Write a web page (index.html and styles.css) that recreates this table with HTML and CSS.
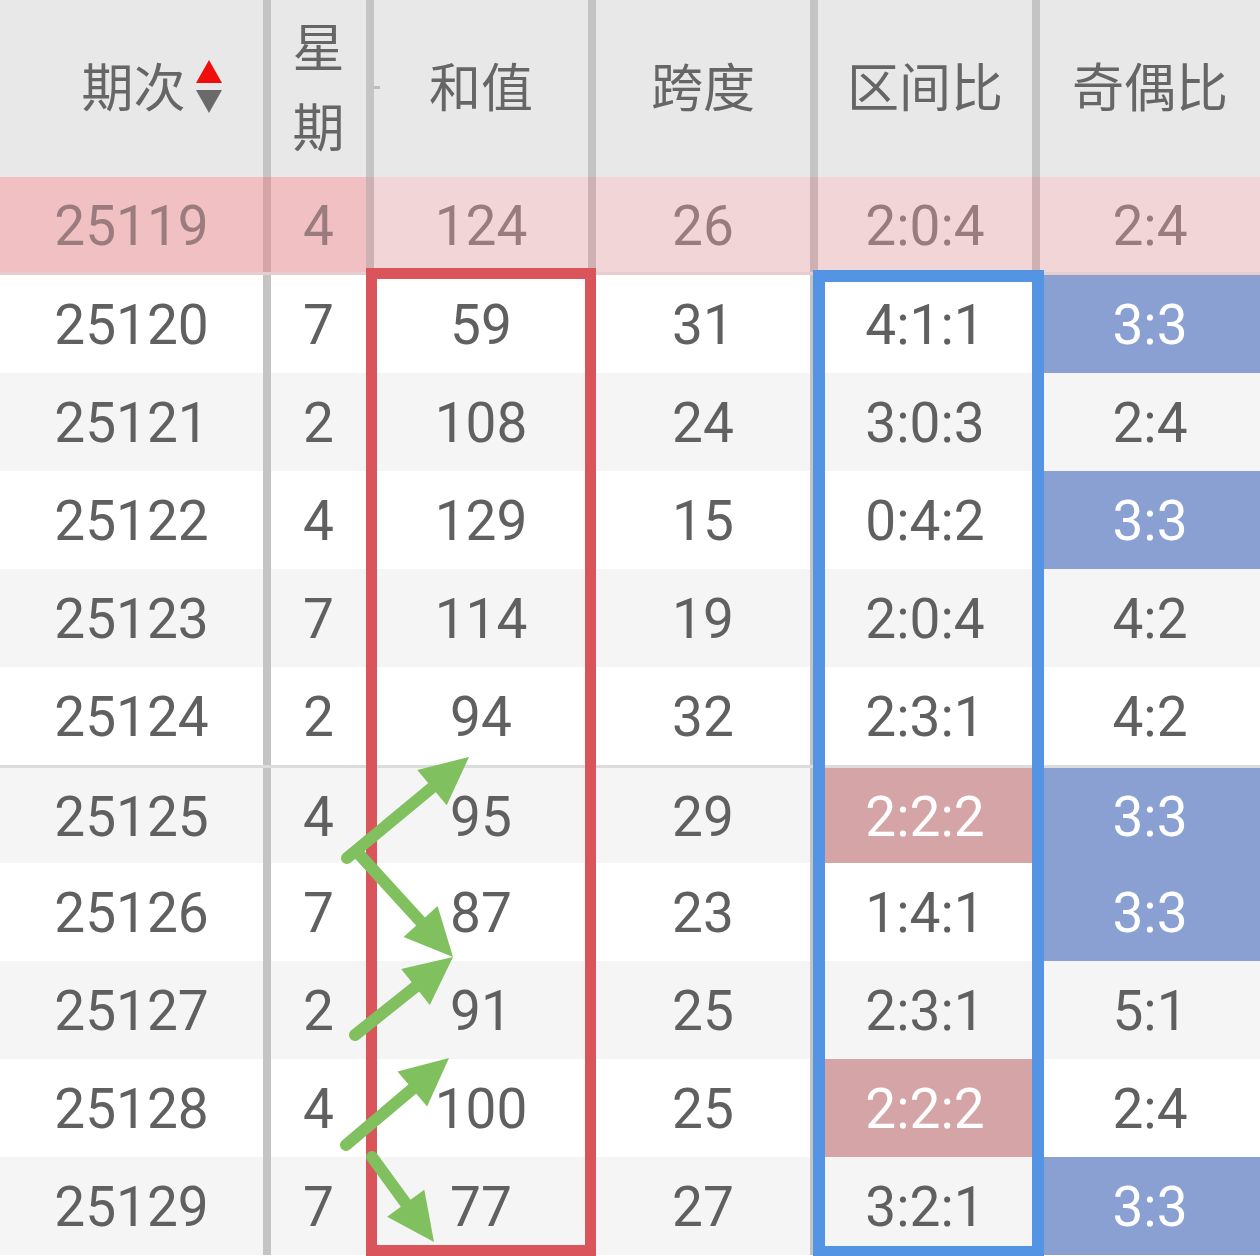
FILE: index.html
```html
<!DOCTYPE html>
<html lang="zh">
<head>
<meta charset="utf-8">
<title>开奖走势</title>
<link rel="stylesheet" href="styles.css">
</head>
<body>
<div class="board">
  <div class="table">
    <div class="row head">
      <div class="cell c1"><span class="htext">期次</span><span class="sort"><i class="up"></i><i class="down"></i></span></div>
      <div class="cell c2 week"><span>星</span><span>期</span></div>
      <div class="cell c3"><span class="tick"></span>和值</div>
      <div class="cell">跨度</div>
      <div class="cell">区间比</div>
      <div class="cell">奇偶比</div>
    </div>

    <div class="row cur">
      <div class="cell c1 strong">25119</div><div class="cell strong">4</div><div class="cell">124</div><div class="cell">26</div><div class="cell">2:0:4</div><div class="cell">2:4</div>
    </div>
    <div class="row">
      <div class="cell c1">25120</div><div class="cell">7</div><div class="cell">59</div><div class="cell">31</div><div class="cell">4:1:1</div><div class="cell blue">3:3</div>
    </div>
    <div class="row alt">
      <div class="cell c1">25121</div><div class="cell">2</div><div class="cell">108</div><div class="cell">24</div><div class="cell">3:0:3</div><div class="cell">2:4</div>
    </div>
    <div class="row">
      <div class="cell c1">25122</div><div class="cell">4</div><div class="cell">129</div><div class="cell">15</div><div class="cell">0:4:2</div><div class="cell blue">3:3</div>
    </div>
    <div class="row alt">
      <div class="cell c1">25123</div><div class="cell">7</div><div class="cell">114</div><div class="cell">19</div><div class="cell">2:0:4</div><div class="cell">4:2</div>
    </div>
    <div class="row">
      <div class="cell c1">25124</div><div class="cell">2</div><div class="cell">94</div><div class="cell">32</div><div class="cell">2:3:1</div><div class="cell">4:2</div>
    </div>
    <div class="row alt sep">
      <div class="cell c1">25125</div><div class="cell">4</div><div class="cell">95</div><div class="cell">29</div><div class="cell pink">2:2:2</div><div class="cell blue">3:3</div>
    </div>
    <div class="row">
      <div class="cell c1">25126</div><div class="cell">7</div><div class="cell">87</div><div class="cell">23</div><div class="cell">1:4:1</div><div class="cell blue">3:3</div>
    </div>
    <div class="row alt">
      <div class="cell c1">25127</div><div class="cell">2</div><div class="cell">91</div><div class="cell">25</div><div class="cell">2:3:1</div><div class="cell">5:1</div>
    </div>
    <div class="row">
      <div class="cell c1">25128</div><div class="cell">4</div><div class="cell">100</div><div class="cell">25</div><div class="cell pink">2:2:2</div><div class="cell">2:4</div>
    </div>
    <div class="row alt">
      <div class="cell c1">25129</div><div class="cell">7</div><div class="cell">77</div><div class="cell">27</div><div class="cell">3:2:1</div><div class="cell blue">3:3</div>
    </div>
  </div>

  <div class="frame frame-red"></div>
  <div class="frame frame-blue"></div>

  <svg class="arrows" width="1260" height="1256" viewBox="0 0 1260 1256" aria-hidden="true">
    <g stroke="#80c05e" stroke-width="12" stroke-linecap="round" fill="none">
      <line x1="347" y1="858" x2="438.2" y2="782.5"/>
      <line x1="358" y1="853" x2="426" y2="927.5"/>
      <line x1="355" y1="1035" x2="421.7" y2="981.9"/>
      <line x1="346" y1="1145" x2="418.4" y2="1083.8"/>
      <line x1="372" y1="1157" x2="410.4" y2="1209.7"/>
    </g>
    <g fill="#80c05e">
      <polygon points="469,757 446.7,805.3 417.3,769.9"/>
      <polygon points="453,957 403.6,937.1 437.6,906.1"/>
      <polygon points="453,957 429.8,1004.9 401.2,968.9"/>
      <polygon points="449,1058 427.1,1106.6 397.5,1071.4"/>
      <polygon points="434,1242 387.1,1216.7 424.3,1189.7"/>
    </g>
  </svg>
</div>
</body>
</html>
```

FILE: styles.css
```css
html, body {
  margin: 0;
  padding: 0;
  background: #ffffff;
  overflow: hidden;
}

.board {
  position: relative;
  width: 1260px;
  height: 1256px;
}

.table {
  display: flex;
  flex-direction: column;
}

.row {
  display: grid;
  grid-template-columns: 263px 103px 222px 222px 222px 228px;
  height: 98px;
  background: #ffffff;
  font-family: Roboto, "Noto Sans", sans-serif;
  font-size: 55px;
  color: #606060;
}

.row.alt {
  background: #f5f5f5;
}

.row.sep {
  border-top: 3px solid #dcdcdc;
  box-sizing: border-box;
}

.cell {
  display: flex;
  align-items: center;
  justify-content: center;
  box-sizing: border-box;
  border-left: 8px solid #c4c4c4;
  line-height: 1;
  padding-top: 3px;
  position: relative;
}

.cell.c1 {
  border-left: none;
}

/* header */
.row.head {
  height: 177px;
  background: #e8e8e8;
  font-family: "Noto Sans CJK SC", "Noto Sans", sans-serif;
  font-size: 52px;
  color: #666666;
}

.head .cell {
  padding-top: 0;
  padding-bottom: 8px;
}

.head .c1 {
  padding-left: 40px;
  gap: 10px;
}

.sort {
  display: flex;
  flex-direction: column;
  gap: 7px;
  margin-top: 4px;
}

.sort i {
  display: block;
  width: 0;
  height: 0;
  border-left: 13px solid transparent;
  border-right: 13px solid transparent;
}

.sort .up {
  border-bottom: 23px solid #f20d0d;
}

.sort .down {
  border-top: 23px solid #6a6a6a;
}

.head .week {
  flex-direction: column;
  gap: 28px;
  line-height: 1;
}

.tick {
  position: absolute;
  left: 0;
  top: 86px;
  width: 6px;
  height: 3px;
  background: #bdbdbd;
}

/* current (last) draw row */
.row.cur {
  background: #f2d5d7;
  color: #9b7c7e;
  border-bottom: 3px solid #e6cdcf;
  box-sizing: border-box;
}

.row.cur .cell {
  border-left-color: #d0b1b3;
}

.row.cur .cell.strong {
  background: #f0c0c2;
}

.row.cur .cell.strong + .cell.strong {
  border-left-color: #d5a4a7;
}

/* highlights */
.cell.blue {
  background: #8aa0d2;
  color: #ffffff;
}

.cell.pink {
  background: #d4a4a6;
  color: #ffffff;
}

/* annotation frames */
.frame {
  position: absolute;
  box-sizing: border-box;
}

.frame-red {
  left: 366px;
  top: 268px;
  width: 230px;
  height: 988px;
  border: 11px solid #da555b;
}

.frame-blue {
  left: 813px;
  top: 270px;
  width: 231px;
  height: 988px;
  border: 12px solid #5394e4;
}

.arrows {
  position: absolute;
  left: 0;
  top: 0;
  pointer-events: none;
}
```
